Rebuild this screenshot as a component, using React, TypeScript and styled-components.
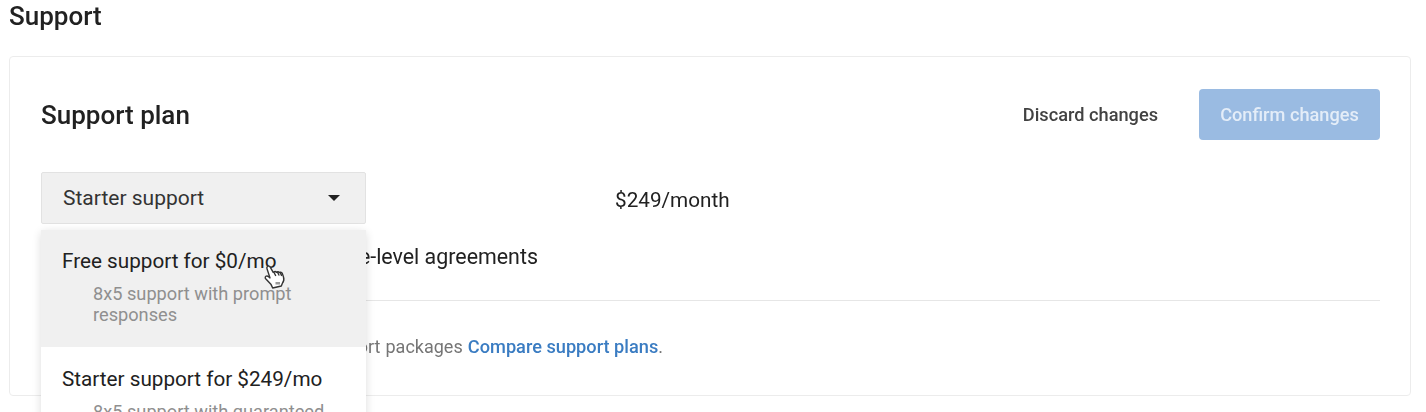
import { createGlobalStyle } from 'styled-components';
import styled from 'styled-components';

const GlobalStyle = createGlobalStyle`
  html, body {
    margin: 0;
    height: 412px;
    overflow: hidden;
    background: #fff;
    font-family: Roboto, "Liberation Sans", sans-serif;
  }
`;

const Page = styled.main`
  width: 1426px;
  height: 412px;
  box-sizing: border-box;
  padding: 1px 15px 0 9px;
  filter: blur(0.45px);
`;

const PageTitle = styled.h1`
  margin: 0 0 25px;
  font-size: 26px;
  line-height: 30px;
  font-weight: 500;
  color: #212121;
`;

const Card = styled.section`
  box-sizing: border-box;
  height: 340px;
  padding: 32px 30px 0 31px;
  border: 1px solid #ececec;
  border-radius: 4px;
`;

const CardHeader = styled.header`
  display: flex;
  align-items: center;
  justify-content: space-between;
  height: 51px;
`;

const CardTitle = styled.h2`
  margin: 0;
  font-size: 26px;
  font-weight: 500;
  color: #212121;
`;

const Actions = styled.div`
  display: flex;
  align-items: center;
  gap: 41px;
`;

const DiscardButton = styled.button`
  padding: 0;
  border: 0;
  background: none;
  font: 500 18.2px Roboto, sans-serif;
  color: #424242;
`;

const ConfirmButton = styled.button`
  width: 181px;
  height: 51px;
  border: 0;
  border-radius: 4px;
  background: #9abbe2;
  font: 500 18.2px Roboto, sans-serif;
  color: #e4edf8;
`;

const PlanRow = styled.div`
  display: flex;
  align-items: center;
  margin-top: 32px;
  height: 52px;
`;

const SelectWrap = styled.div`
  position: relative;
  width: 325px;
`;

const SelectBox = styled.div`
  box-sizing: border-box;
  display: flex;
  align-items: center;
  justify-content: space-between;
  height: 52px;
  padding: 0 25px 0 21px;
  background: #f0f0f0;
  border: 1px solid #e2e2e2;
  border-radius: 2px;
  font-size: 21px;
  color: #333;
`;

const Caret = styled.span`
  width: 0;
  height: 0;
  border-left: 6px solid transparent;
  border-right: 6px solid transparent;
  border-top: 6px solid #212121;
`;

const Menu = styled.ul`
  position: absolute;
  z-index: 2;
  top: 58px;
  left: 0;
  width: 325px;
  margin: 0;
  padding: 0;
  list-style: none;
  background: #fff;
  border-radius: 4px 4px 0 0;
  box-shadow: 0 2px 10px rgba(0, 0, 0, 0.14);
`;

const MenuItem = styled.li<{ $active?: boolean }>`
  box-sizing: border-box;
  position: relative;
  height: ${({ $active }) => ($active ? '117px' : '130px')};
  padding: ${({ $active }) => ($active ? '17px' : '18px')} 21px 0;
  background: ${({ $active }) => ($active ? '#f0f0f0' : '#fff')};
`;

const ItemTitle = styled.div`
  font-size: 20.7px;
  line-height: 28px;
  color: #212121;
`;

const ItemHint = styled.div`
  margin: 9px 0 0 31px;
  width: 240px;
  font-size: 18.2px;
  line-height: 20.5px;
  color: #8f8f8f;
`;

const HandCursor = styled.svg`
  position: absolute;
  left: 222px;
  top: 33px;
  width: 24px;
  height: 26px;
`;

const Price = styled.div`
  margin: 3px 0 0 249px;
  font-size: 20.7px;
  color: #212121;
`;

const Summary = styled.p`
  margin: 19px 0 0;
  height: 32px;
  font-size: 21.4px;
  line-height: 28px;
  color: #212121;
`;

const Divider = styled.hr`
  margin: 25px 0 0;
  border: 0;
  border-top: 1px solid #e6e6e6;
`;

const Note = styled.p`
  margin: 35px 0 0;
  font-size: 18px;
  line-height: 22px;
  word-spacing: 0.7px;
  color: #757575;
`;

const NoteLink = styled.a`
  color: #3a7cc2;
  font-weight: 500;
  font-size: 18.2px;
  word-spacing: 0;
`;

export default function App() {
  return (
    <>
      <GlobalStyle />
      <Page>
        <PageTitle>Support</PageTitle>
        <Card>
          <CardHeader>
            <CardTitle>Support plan</CardTitle>
            <Actions>
              <DiscardButton>Discard changes</DiscardButton>
              <ConfirmButton>Confirm changes</ConfirmButton>
            </Actions>
          </CardHeader>
          <PlanRow>
            <SelectWrap>
              <SelectBox>
                Starter support
                <Caret />
              </SelectBox>
              <Menu>
                <MenuItem $active>
                  <ItemTitle>Free support for $0/mo</ItemTitle>
                  <ItemHint>8x5 support with prompt responses</ItemHint>
                  <HandCursor viewBox="0 0 24 26" fill="#fff" stroke="#333" strokeWidth="1.4" strokeLinejoin="round" strokeLinecap="round">
                    <path d="M4.5 3.5c1-.8 2.1-.4 2.7.6l3 5.2.8-.5c.9-.5 1.8-.3 2.4.5l.5-.3c.9-.5 1.9-.2 2.4.6l.5-.2c1-.4 2 0 2.5 1l1.2 3.6c.8 2.6.3 4.7-1.2 6.4l-1 2.6-8.6 2-1.6-3.4-5.4-5.8c-.7-.9-.6-1.9.2-2.5.8-.6 1.8-.4 2.7.4l1.4 1.2L4 5.8c-.4-.9-.2-1.7.5-2.3z" />
                    <path d="M11 9.5l1.6 3M14.4 9l1.5 3M17.3 9.6l1.2 2.8" />
                    <rect x="12.5" y="19" width="4.5" height="2.5" fill="#999" stroke="none" />
                  </HandCursor>
                </MenuItem>
                <MenuItem>
                  <ItemTitle>Starter support for $249/mo</ItemTitle>
                  <ItemHint>8x5 support with guaranteed response times</ItemHint>
                </MenuItem>
              </Menu>
            </SelectWrap>
            <Price>$249/month</Price>
          </PlanRow>
          <Summary>Timely response times and service-level agreements</Summary>
          <Divider />
          <Note>
            Compare fees and features of our support packages <NoteLink>Compare support plans</NoteLink>.
          </Note>
        </Card>
      </Page>
    </>
  );
}
